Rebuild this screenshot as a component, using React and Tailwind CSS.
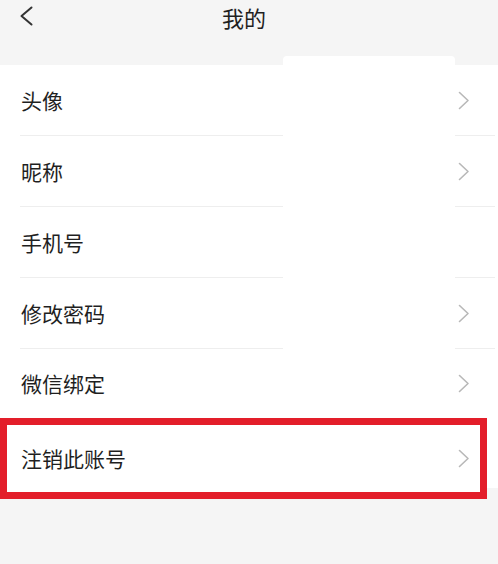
const rows = [
  { label: "头像", arrow: true },
  { label: "昵称", arrow: true },
  { label: "手机号", arrow: false },
  { label: "修改密码", arrow: true },
  { label: "微信绑定", arrow: true, last: true },
];

function Arrow() {
  return (
    <svg width="12" height="19" viewBox="0 0 12 19" fill="none" className="shrink-0">
      <path d="M1.5 1.5 L10 9.5 L1.5 17.5" stroke="#b8b8b8" strokeWidth="1.6" strokeLinecap="round" strokeLinejoin="round" />
    </svg>
  );
}

export default function App() {
  return (
    <div
      className="relative w-full h-[564px] bg-[#f5f5f5] overflow-hidden text-[#1f1f1f]"
      style={{ fontFamily: '"Noto Sans CJK SC", "Noto Sans", sans-serif' }}
    >
      {/* header */}
      <div className="h-[65px] flex items-start">
        <div className="w-[60px] pl-[19px] pt-[6px]">
          <svg width="15" height="20" viewBox="0 0 15 20" fill="none">
            <path d="M12.5 1.5 L2.5 10 L12.5 18.5" stroke="#333" strokeWidth="2" strokeLinecap="round" strokeLinejoin="round" />
          </svg>
        </div>
        <div className="flex-1 text-center pr-[70px] text-[22px] leading-[34px]">我的</div>
      </div>

      {/* list */}
      <div className="bg-white">
        {rows.map((r) => (
          <div key={r.label} className={"pl-[20px] pr-[3px] " + (r.last ? "h-[69px]" : "h-[71px]")}>
            <div className={"h-full flex items-center justify-between " + (r.last ? "" : "border-b border-[#eeeeee]")}>
              <span className="text-[21px] leading-none pl-[1px]">{r.label}</span>
              {r.arrow && (
                <span className="mr-[25px]">
                  <Arrow />
                </span>
              )}
            </div>
          </div>
        ))}
      </div>

      {/* highlighted row */}
      <div className="flex items-start">
        <div className="w-[487px] h-[81px] border-[7px] border-[#e31e2a] bg-white flex items-center justify-between pl-[14px] pr-[10px]">
          <span className="text-[21px] leading-none">注销此账号</span>
          <Arrow />
        </div>
        <div className="flex-1 h-[70px] bg-white" />
      </div>

      {/* white redaction block */}
      <div className="absolute left-[283px] top-[56px] w-[172px] h-[340px] bg-white rounded-t-[4px]" />
    </div>
  );
}
